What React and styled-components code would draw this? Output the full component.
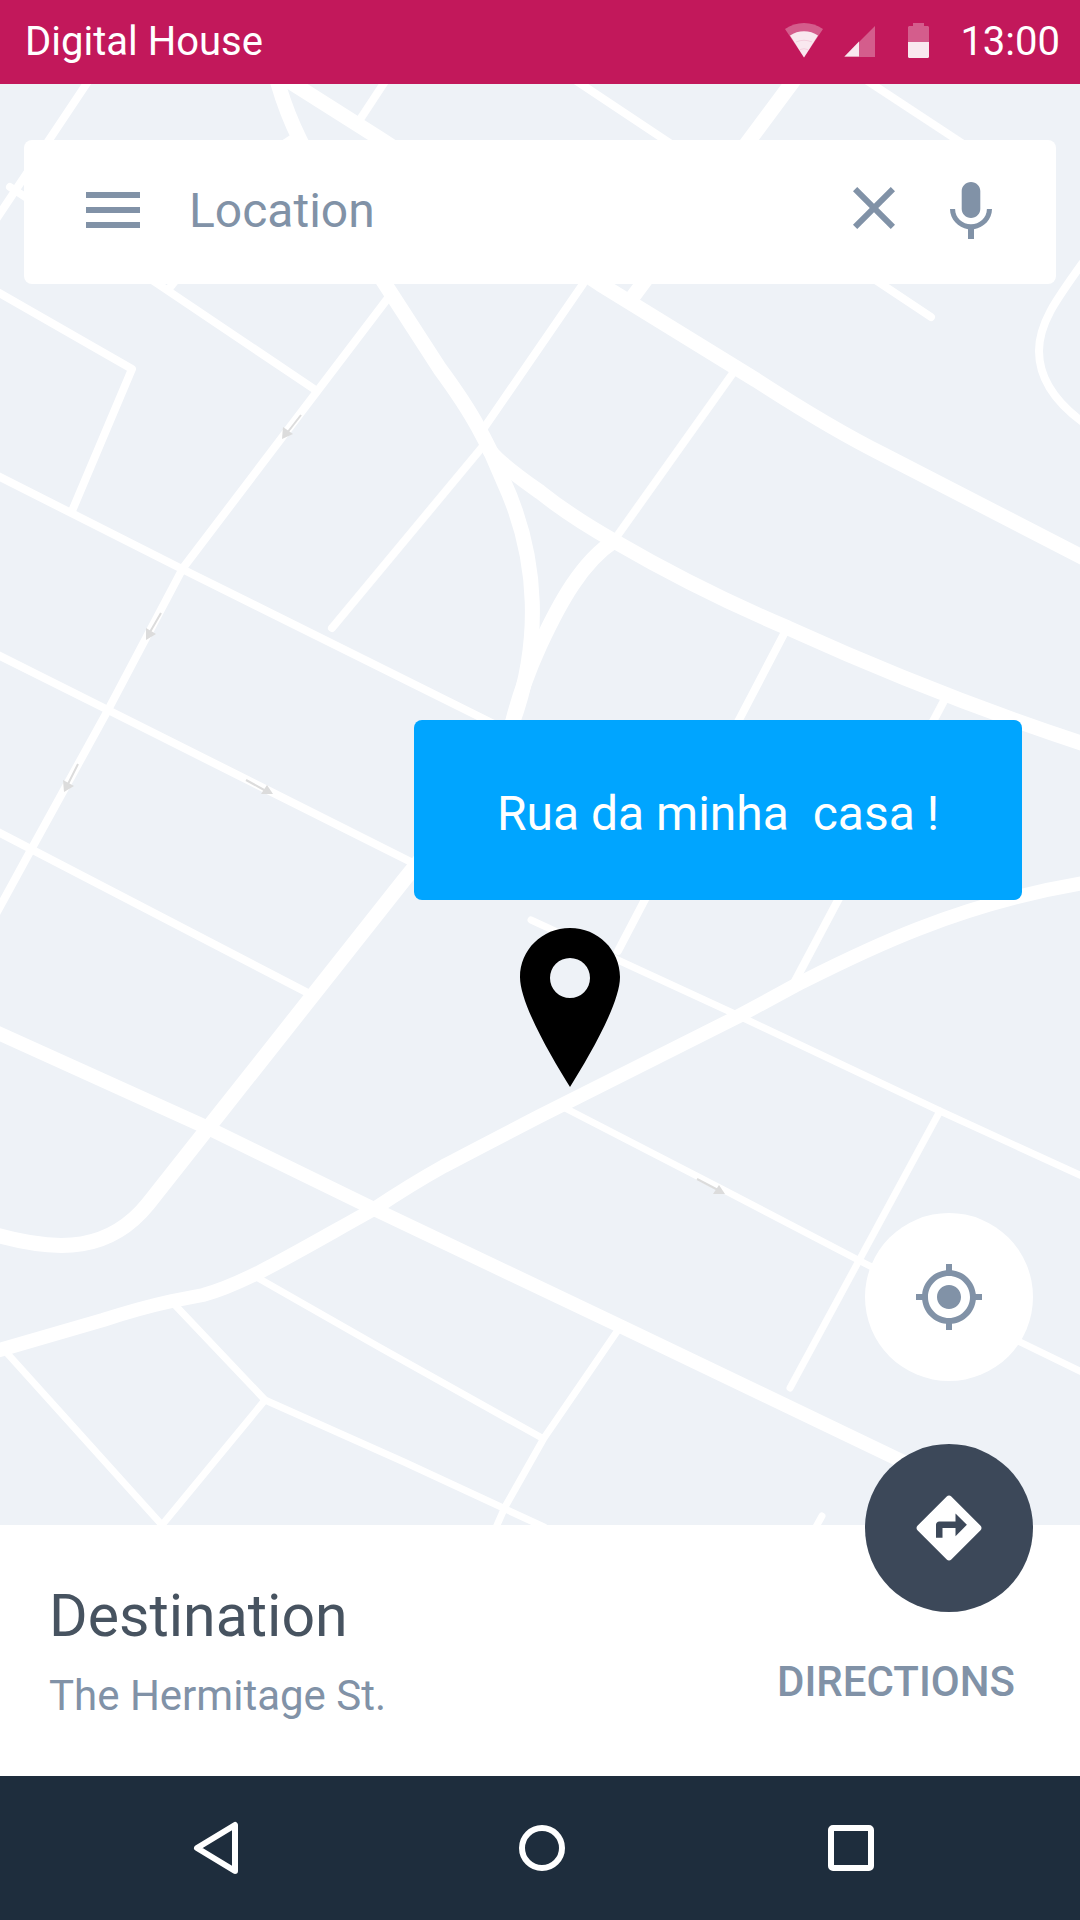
import React from "react";
import styled, { createGlobalStyle } from "styled-components";

const GlobalStyle = createGlobalStyle`
  *, *::before, *::after { box-sizing: border-box; }
  body {
    margin: 0;
    font-family: Roboto, "Liberation Sans", sans-serif;
    font-size: 42px;
    background: #ffffff;
  }
  button, input { font: inherit; color: inherit; }
  svg { display: block; }
`;

const colors = {
  brand: "#c2185b",
  land: "#eef2f7",
  road: "#ffffff",
  arrow: "#dcdcdc",
  muted: "#8192a7",
  ink: "#475360",
  slate: "#3c4859",
  navy: "#1e2d3d",
  callout: "#00a5ff",
};

const Screen = styled.div`
  display: flex;
  flex-direction: column;
  min-height: 100vh;
`;

const StatusBar = styled.header`
  display: flex;
  align-items: center;
  justify-content: space-between;
  height: 84px;
  padding: 0 20px 2px 25px;
  background: ${colors.brand};
  color: #ffffff;
  font-size: 40px;
`;

const StatusIcons = styled.div`
  display: flex;
  align-items: center;
  gap: 21px;
`;

const Clock = styled.time`
  margin-left: -2px;
`;

const MapArea = styled.main`
  position: relative;
  flex: 1;
  padding: 56px 24px 0;
  background: ${colors.land};
`;

const MapCanvas = styled.svg`
  position: absolute;
  inset: 0;
  width: 100%;
  height: 100%;
`;

const SearchCard = styled.form`
  position: relative;
  display: flex;
  align-items: center;
  height: 144px;
  padding: 0 49px 0 53px;
  border-radius: 8px;
  background: #ffffff;
  color: ${colors.muted};
`;

const IconButton = styled.button`
  display: flex;
  flex: none;
  align-items: center;
  justify-content: center;
  width: ${(p) => p.$size || 72}px;
  height: ${(p) => p.$size || 72}px;
  padding: 0;
  border: 0;
  background: none;
  cursor: pointer;
`;

const SearchInput = styled.input`
  flex: 1;
  min-width: 0;
  height: 72px;
  margin: 0 40px;
  padding: 0 0 4px;
  border: 0;
  outline: 0;
  background: none;
  font-size: 48px;
  &::placeholder {
    color: ${colors.muted};
    opacity: 1;
  }
`;

const SearchActions = styled.div`
  display: flex;
  gap: 25px;
`;

const Marker = styled.div`
  position: absolute;
  top: 636px;
  right: 58px;
  display: flex;
  flex-direction: column;
  align-items: flex-start;
  gap: 28px;
  width: 608px;
`;

const Callout = styled.div`
  display: flex;
  align-items: center;
  justify-content: center;
  width: 100%;
  height: 180px;
  padding-top: 6px;
  border-radius: 8px;
  background: ${colors.callout};
  color: #ffffff;
  font-size: 48px;
  white-space: pre;
`;

const PinIcon = styled.svg`
  margin-left: 106px;
`;

const Fab = styled.button`
  position: absolute;
  right: 47px;
  ${(p) => (p.$raised ? "top: -81px;" : "bottom: 144px;")}
  display: flex;
  align-items: center;
  justify-content: center;
  width: 168px;
  height: 168px;
  padding: 0;
  border: 0;
  border-radius: 50%;
  background: ${(p) => (p.$raised ? colors.slate : "#ffffff")};
  color: ${(p) => (p.$raised ? "#ffffff" : colors.muted)};
  cursor: pointer;
`;

const Sheet = styled.section`
  position: relative;
  display: flex;
  align-items: flex-end;
  justify-content: space-between;
  padding: 55px 65px 56px 49px;
  background: #ffffff;
  color: ${colors.muted};
`;

const Place = styled.div`
  display: flex;
  flex-direction: column;
  gap: 20px;
`;

const PlaceTitle = styled.h1`
  margin: 0;
  color: ${colors.ink};
  font-size: 59px;
  font-weight: 400;
  line-height: 72px;
`;

const PlaceAddress = styled.p`
  margin: 0;
  line-height: 48px;
`;

const DirectionsLink = styled.a`
  margin-bottom: 14px;
  color: inherit;
  font-weight: 500;
  line-height: 48px;
  text-decoration: none;
`;

const NavBar = styled.nav`
  display: flex;
  align-items: center;
  justify-content: center;
  gap: 229px;
  height: 144px;
  padding-left: 4px;
  background: ${colors.navy};
  color: #ffffff;
`;

const mainRoads = [
  "M277 80 Q286 112 300 140 C325 190 355 238 385 284 L440 369 Q465 403 478 427 Q484 438 490 450 L503 480 C540 560 541 645 512 724",
  "M490 451 Q500 464 540 492 Q570 516 614 541 Q698 590 788 628 Q938 696 1084 744",
  "M284 78 L382 140 L600 284 L756 380 Q830 428 884 455 L1084 558",
  "M794 80 L632 298",
  "M614 541 C582 562 560 602 540 645 Q522 684 512 724",
  "M430 848 L404 880 L208 1128 L148 1204 C110 1251 60 1253 -4 1235",
];

const broadRoads = [
  "M-4 1032 L208 1128 L374 1209 L620 1326 L960 1489",
  "M-4 1351 L103 1320 Q140 1308 172 1301 L203 1295 C245 1284 300 1250 374 1209 Q410 1185 444 1166 Q480 1147 540 1116 L737 1017 L796 985 C850 958 950 905 1084 883",
];

const streets = [
  "M89 80 L-3 218",
  "M10 187 L158 284 L317 391",
  "M168 290 L190 262",
  "M296 136 L265 156",
  "M386 80 L361 118",
  "M388 298 L183 568 L108 710 L32 848 L-3 912",
  "M-4 291 L132 369 L72 511",
  "M583 284 L484 428",
  "M484 445 L332 628",
  "M733 373 L615 539",
  "M575 80 L931 317",
  "M866 80 L980 155",
  "M1084 261 C1056 300 1039 323 1039 351 C1039 378 1055 402 1084 423",
  "M-4 475 L184 570 L500 727",
  "M-4 654 L108 710 L415 864",
  "M-4 831 L308 993",
  "M785 632 L618 951",
  "M946 697 L794 983",
];

const lanes = [
  "M531 920 L737 1015 L940 1111 L1084 1177",
  "M940 1111 L790 1388",
  "M563 1107 L722 1189 L864 1263 L1018 1341 L1084 1373",
  "M258 1278 L379 1347 L542 1438",
  "M618 1330 L544 1438 L505 1507 L494 1532",
  "M174 1304 L265 1400 L404 1462 L544 1527",
  "M265 1400 L162 1525 L6 1352",
  "M822 1516 L812 1534",
];

const wayArrows = [
  { line: "M301 415 L287 433", head: "282,439 283,427 293,434" },
  { line: "M161 613 L150 632", head: "146,640 146,628 156,634" },
  { line: "M78 764 L68 784", head: "64,792 63,780 74,786" },
  { line: "M246 780 L266 791", head: "273,794 267,785 261,794" },
  { line: "M697 1179 L718 1190", head: "725,1194 719,1185 713,1194" },
];

function StreetMap() {
  return (
    <MapCanvas
      viewBox="0 84 1080 1441"
      preserveAspectRatio="xMidYMid slice"
      aria-hidden="true"
    >
      <g fill="none" stroke={colors.road} strokeLinecap="round" strokeLinejoin="round">
        <g strokeWidth="15">
          {mainRoads.map((d) => <path key={d} d={d} />)}
        </g>
        <g strokeWidth="14">
          {broadRoads.map((d) => <path key={d} d={d} />)}
        </g>
        <g strokeWidth="8">
          {streets.map((d) => <path key={d} d={d} />)}
        </g>
        <g strokeWidth="7">
          {lanes.map((d) => <path key={d} d={d} />)}
        </g>
      </g>
      {wayArrows.map((a) => (
        <g key={a.line}>
          <path d={a.line} fill="none" stroke={colors.arrow} strokeWidth="2" />
          <polygon points={a.head} fill={colors.arrow} />
        </g>
      ))}
    </MapCanvas>
  );
}

function Icon({ d, size = 72, viewBox = "0 0 24 24" }) {
  return (
    <svg width={size} height={size} viewBox={viewBox} fill="currentColor" aria-hidden="true">
      <path d={d} />
    </svg>
  );
}

const glyphs = {
  menu: "M3 18h18v-2H3v2zm0-5h18v-2H3v2zm0-7v2h18V6H3z",
  close:
    "M19 6.41L17.59 5 12 10.59 6.41 5 5 6.41 10.59 12 5 17.59 6.41 19 12 13.41 17.59 19 19 17.59 13.41 12z",
  mic: "M12 14c1.7 0 3.1-1.34 3.1-3V5c0-1.66-1.4-3-3.1-3S8.900 3.34 8.900 5v6c0 1.66 1.4 3 3.1 3zm5.3-3c0 3-2.54 5.1-5.3 5.1S6.7 14 6.7 11H5c0 3.41 2.72 6.23 6 6.72V21h2v-3.28c3.28-.48 6-3.3 6-6.72h-1.7z",
  locate:
    "M12 8c-2.21 0-4 1.79-4 4s1.79 4 4 4 4-1.79 4-4-1.79-4-4-4zm8.94 3c-.46-4.17-3.77-7.48-7.94-7.94V1h-2v2.06C6.83 3.52 3.52 6.83 3.06 11H1v2h2.06c.46 4.17 3.77 7.48 7.94 7.94V23h2v-2.06c4.17-.46 7.48-3.77 7.94-7.94H23v-2h-2.06zM12 19c-3.87 0-7-3.13-7-7s3.13-7 7-7 7 3.13 7 7-3.13 7-7 7z",
  directions:
    "M21.71 11.29l-9-9c-.39-.39-1.02-.39-1.41 0l-9 9c-.39.39-.39 1.02 0 1.41l9 9c.39.39 1.02.39 1.41 0l9-9c.39-.38.39-1.01 0-1.41zM14 14.5V12h-4v3H8v-4c0-.55.45-1 1-1h5V7.5l3.5 3.5-3.5 3.5z",
};

function StatusIcon({ children }) {
  return (
    <svg width="38" height="38" viewBox="0 -1 38 38" fill="#ffffff" aria-hidden="true">
      {children}
    </svg>
  );
}

function NavIcon({ children }) {
  return (
    <svg
      width="80"
      height="80"
      viewBox="0 0 80 80"
      fill="none"
      stroke="currentColor"
      strokeWidth="6"
      strokeLinejoin="round"
      aria-hidden="true"
    >
      {children}
    </svg>
  );
}

export default function App() {
  return (
    <>
      <GlobalStyle />
      <Screen>
        <StatusBar>
          <span>Digital House</span>
          <StatusIcons>
            <StatusIcon>
              <path opacity="0.3" d="M19 34.5 L0 6 C11 -2 27 -2 38 6 Z" />
              <path opacity="0.86" d="M19 34.5 L5 12.5 C13 6.7 25 6.7 33 12.5 Z" />
              <path
                d="M11 19 Q19 15.5 27 19 M15 26.5 Q19 25 23 26.5"
                fill="none"
                stroke={colors.brand}
                strokeOpacity="0.12"
              />
            </StatusIcon>
            <StatusIcon>
              <path opacity="0.3" d="M31 3 V34 H0 Z" />
              <path opacity="0.86" d="M15 18.5 V33.5 H0.5 Z" />
            </StatusIcon>
            <StatusIcon>
              <path opacity="0.3" d="M10 0 H21 V3 H25 L26 4 V34 L25 35 H6 L5 34 V4 L6 3 H10 Z" />
              <path opacity="0.86" d="M5 19 H26 V34 L25 35 H6 L5 34 Z" />
            </StatusIcon>
            <Clock>13:00</Clock>
          </StatusIcons>
        </StatusBar>

        <MapArea>
          <StreetMap />
          <SearchCard role="search" onSubmit={(e) => e.preventDefault()}>
            <IconButton type="button" aria-label="Menu">
              <Icon d={glyphs.menu} viewBox="0 0.67 24 24" />
            </IconButton>
            <SearchInput type="text" placeholder="Location" aria-label="Location" />
            <SearchActions>
              <IconButton type="button" aria-label="Clear">
                <Icon d={glyphs.close} viewBox="0 1.33 24 24" />
              </IconButton>
              <IconButton type="button" aria-label="Voice search">
                <Icon d={glyphs.mic} />
              </IconButton>
            </SearchActions>
          </SearchCard>

          <Marker>
            <Callout>{"Rua da minha  casa !"}</Callout>
            <PinIcon width="100" height="160" viewBox="0 0 100 160" aria-hidden="true">
              <path
                fillRule="evenodd"
                d="M50 0 C22 0 0 22 0 49 C0 76 32 130 50 159 C68 130 100 76 100 49 C100 22 78 0 50 0 Z M50 30 a20 20 0 1 1 0 40 a20 20 0 1 1 0 -40 Z"
              />
            </PinIcon>
          </Marker>

          <Fab type="button" aria-label="My location">
            <Icon d={glyphs.locate} />
          </Fab>
        </MapArea>

        <Sheet>
          <Place>
            <PlaceTitle>Destination</PlaceTitle>
            <PlaceAddress>The Hermitage St.</PlaceAddress>
          </Place>
          <DirectionsLink href="#directions">DIRECTIONS</DirectionsLink>
          <Fab type="button" $raised aria-label="Start route">
            <Icon d={glyphs.directions} size={78} />
          </Fab>
        </Sheet>

        <NavBar aria-label="System">
          <IconButton type="button" $size={80} aria-label="Back">
            <NavIcon>
              <path d="M4 40 L42 17 V63 Z" />
            </NavIcon>
          </IconButton>
          <IconButton type="button" $size={80} aria-label="Home">
            <NavIcon>
              <circle cx="40" cy="40" r="20" />
            </NavIcon>
          </IconButton>
          <IconButton type="button" $size={80} aria-label="Recent apps">
            <NavIcon>
              <rect x="20" y="20" width="40" height="40" rx="2" />
            </NavIcon>
          </IconButton>
        </NavBar>
      </Screen>
    </>
  );
}
